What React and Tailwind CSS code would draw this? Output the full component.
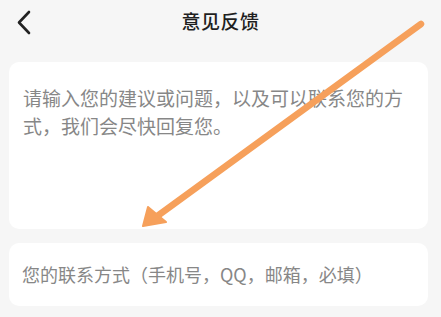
import React from "react";

export default function App() {
  const font = { fontFamily: '"Noto Sans CJK SC", "Noto Sans", sans-serif' };
  return (
    <div className="relative w-[441px] h-[317px] bg-[#f6f6f6] overflow-hidden" style={font}>
      <div className="relative h-[44px] flex items-center justify-center">
        <svg className="absolute left-[14px] top-[8px]" width="22" height="30" viewBox="0 0 22 30">
          <polyline points="15,4 5,14.5 15,25" fill="none" stroke="#222" strokeWidth="2.6" strokeLinecap="round" strokeLinejoin="round" />
        </svg>
        <div className="text-[19px] font-medium text-[#1f1f1f] tracking-[0.5px] -mt-[2px]">意见反馈</div>
      </div>
      <div className="ml-[9px] mt-[18px] w-[419px] h-[167px] bg-white rounded-[10px] px-[14px] pt-[22px]">
        <p className="text-[19px] leading-[28px] text-[#878787]">
          请输入您的建议或问题，以及可以联系您的方式，我们会尽快回复您。
        </p>
      </div>
      <div className="ml-[9px] mt-[14px] w-[419px] h-[63px] bg-white rounded-[10px] px-[13px] flex items-center">
        <span className="text-[18px] text-[#878787]">您的联系方式（手机号，QQ，邮箱，必填）</span>
      </div>
      <svg className="absolute left-0 top-0 pointer-events-none" width="441" height="317" viewBox="0 0 441 317">
        <line x1="421" y1="24" x2="156" y2="217" stroke="#f6a05b" strokeWidth="6.5" strokeLinecap="round" />
        <polygon points="143,226 148,207 166,222" fill="#f6a05b" stroke="#f6a05b" strokeWidth="2" strokeLinejoin="round" />
      </svg>
    </div>
  );
}
